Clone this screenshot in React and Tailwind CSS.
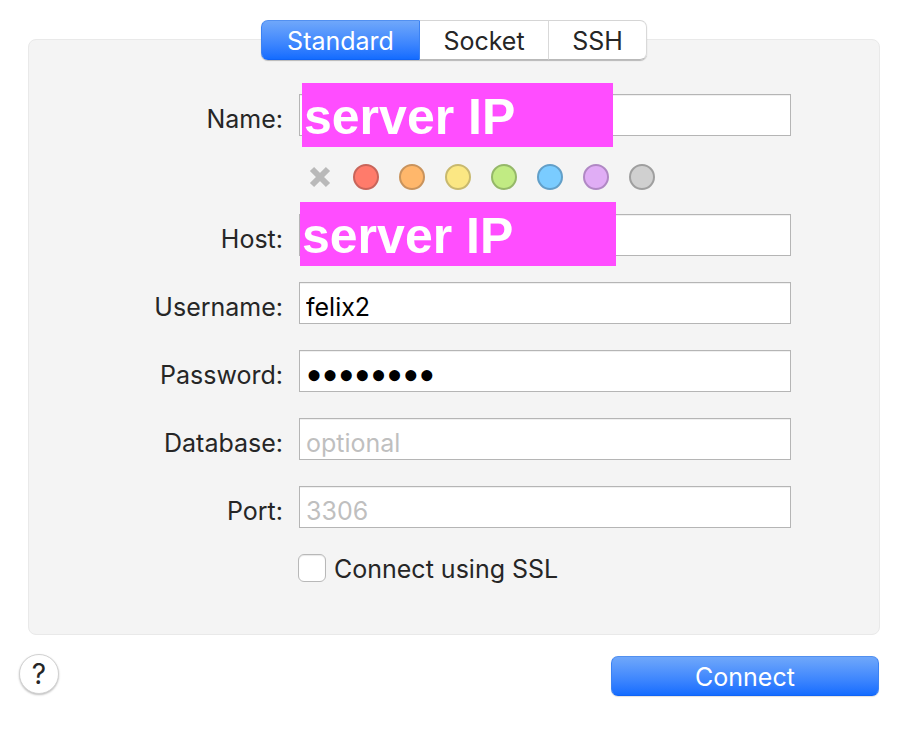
import { useState } from "react";

const tabs = [
  { name: "Standard", width: "w-[159px]" },
  { name: "Socket", width: "w-[129px]" },
  { name: "SSH", width: "w-[98px]" },
];

const colors = [
  { name: "Red", style: "bg-[#ff7b6b] border-[#c8655a]" },
  { name: "Orange", style: "bg-[#ffb76b] border-[#c9935c]" },
  { name: "Yellow", style: "bg-[#fbe783] border-[#c8b96e]" },
  { name: "Green", style: "bg-[#c1eb83] border-[#95b869]" },
  { name: "Blue", style: "bg-[#7accff] border-[#629fc8]" },
  { name: "Purple", style: "bg-[#e0adf5] border-[#b088c4]" },
  { name: "Gray", style: "bg-[#d0d0d0] border-[#9f9f9f]" },
];

const primary =
  "bg-linear-to-b from-[#6fa7fa] to-[#136cff] text-white border border-t-[#5290f0] border-x-[#3b82f3] border-b-[#0f63f5]";

function Field({ id, label, children, type = "text", ...props }) {
  const font =
    type === "password" ? "font-['Liberation_Serif',serif] text-[46px] leading-[30px]" : "";
  return (
    <div className="flex items-center gap-4">
      <label htmlFor={id} className="w-[254px] shrink-0 pt-2 text-right">
        {label}
      </label>
      <div className="relative min-w-0 flex-1">
        <input
          id={id}
          type={type}
          className={`block h-[42px] w-full border border-[#b5b5b5] bg-white px-[6px] pt-2 text-black shadow-[inset_0_1px_0_#f0f0f0] outline-none placeholder:text-[#bfbfbf] ${font}`}
          {...props}
        />
        {children}
      </div>
    </div>
  );
}

export default function App() {
  const [tab, setTab] = useState("Standard");
  return (
    <main className="min-h-screen bg-white pt-5 pr-[38px] pb-[38px] pl-5 font-['Inter',sans-serif] text-[25px] leading-[30px] text-[#262626]">
      <form onSubmit={(e) => e.preventDefault()}>
        <div className="relative z-10 ml-2 flex justify-center">
          <div className="flex h-10 rounded-[7px] bg-white shadow-[0_1px_1px_#00000040]">
            {tabs.map((t, i) => (
              <button
                key={t.name}
                type="button"
                onClick={() => setTab(t.name)}
                className={`${t.width} pt-px ${i === 0 ? "rounded-l-[7px]" : ""} ${
                  i === 2 ? "rounded-r-[7px]" : ""
                } ${
                  tab === t.name
                    ? primary
                    : "border-y border-r border-t-[#d5d5d5] border-r-[#d9d9d9] border-b-[#b9b9b9] bg-white"
                }`}
              >
                {t.name}
              </button>
            ))}
          </div>
        </div>

        <section className="-mt-[21px] ml-2 rounded-lg border border-[#e9e9e9] bg-[#f4f4f4] pt-[54px] pr-[88px] pb-[50px]">
          <Field id="name" label="Name:">
            <span className="absolute -top-[11px] left-[3px] h-16 w-[311px] bg-[#ff4dff] pt-1 pl-[2px] font-['Liberation_Sans',Arial,sans-serif] text-[50px] leading-[60px] font-bold text-white">
              server IP
            </span>
          </Field>

          <div className="mt-7 mb-6 ml-[278px] flex items-center gap-5">
            <button type="button" aria-label="No color" className="size-[26px]">
              <svg viewBox="0 0 26 26" className="size-[26px]" fill="none" stroke="#b9b9b9" strokeWidth="6">
                <path d="M5 5 L21 21 M21 5 L5 21" />
              </svg>
            </button>
            {colors.map((c) => (
              <button
                key={c.name}
                type="button"
                aria-label={c.name}
                className={`size-[26px] rounded-full border-2 ${c.style}`}
              />
            ))}
          </div>

          <div className="flex flex-col gap-[26px]">
            <Field id="host" label="Host:">
              <span className="absolute -top-3 left-px h-16 w-[316px] bg-[#ff4dff] pt-1 pl-[2px] font-['Liberation_Sans',Arial,sans-serif] text-[50px] leading-[60px] font-bold text-white">
                server IP
              </span>
            </Field>
            <Field id="username" label="Username:" defaultValue="felix2" />
            <Field id="password" label="Password:" type="password" defaultValue="password" />
            <Field id="database" label="Database:" placeholder="optional" />
            <Field id="port" label="Port:" placeholder="3306" />
          </div>

          <div className="mt-6 ml-[269px] flex items-center gap-2">
            <input
              id="ssl"
              type="checkbox"
              className="size-7 appearance-none rounded-[6px] border border-[#b8b8b8] bg-white shadow-[inset_0_1px_1px_#00000018] checked:bg-[#136cff]"
            />
            <label htmlFor="ssl" className="pt-0.5">
              Connect using SSL
            </label>
          </div>
        </section>

        <div className="mt-[19px] -ml-px flex items-end justify-between pr-px">
          <button
            type="button"
            aria-label="Help"
            className="mb-0.5 size-10 rounded-full border border-[#d2d2d2] bg-white text-[28px] leading-[36px] shadow-[0_1px_2px_#00000040]"
          >
            ?
          </button>
          <button type="submit" className={`h-10 w-[268px] rounded-[7px] pt-px shadow-[0_1px_1px_#00000020] ${primary}`}>
            Connect
          </button>
        </div>
      </form>
    </main>
  );
}
